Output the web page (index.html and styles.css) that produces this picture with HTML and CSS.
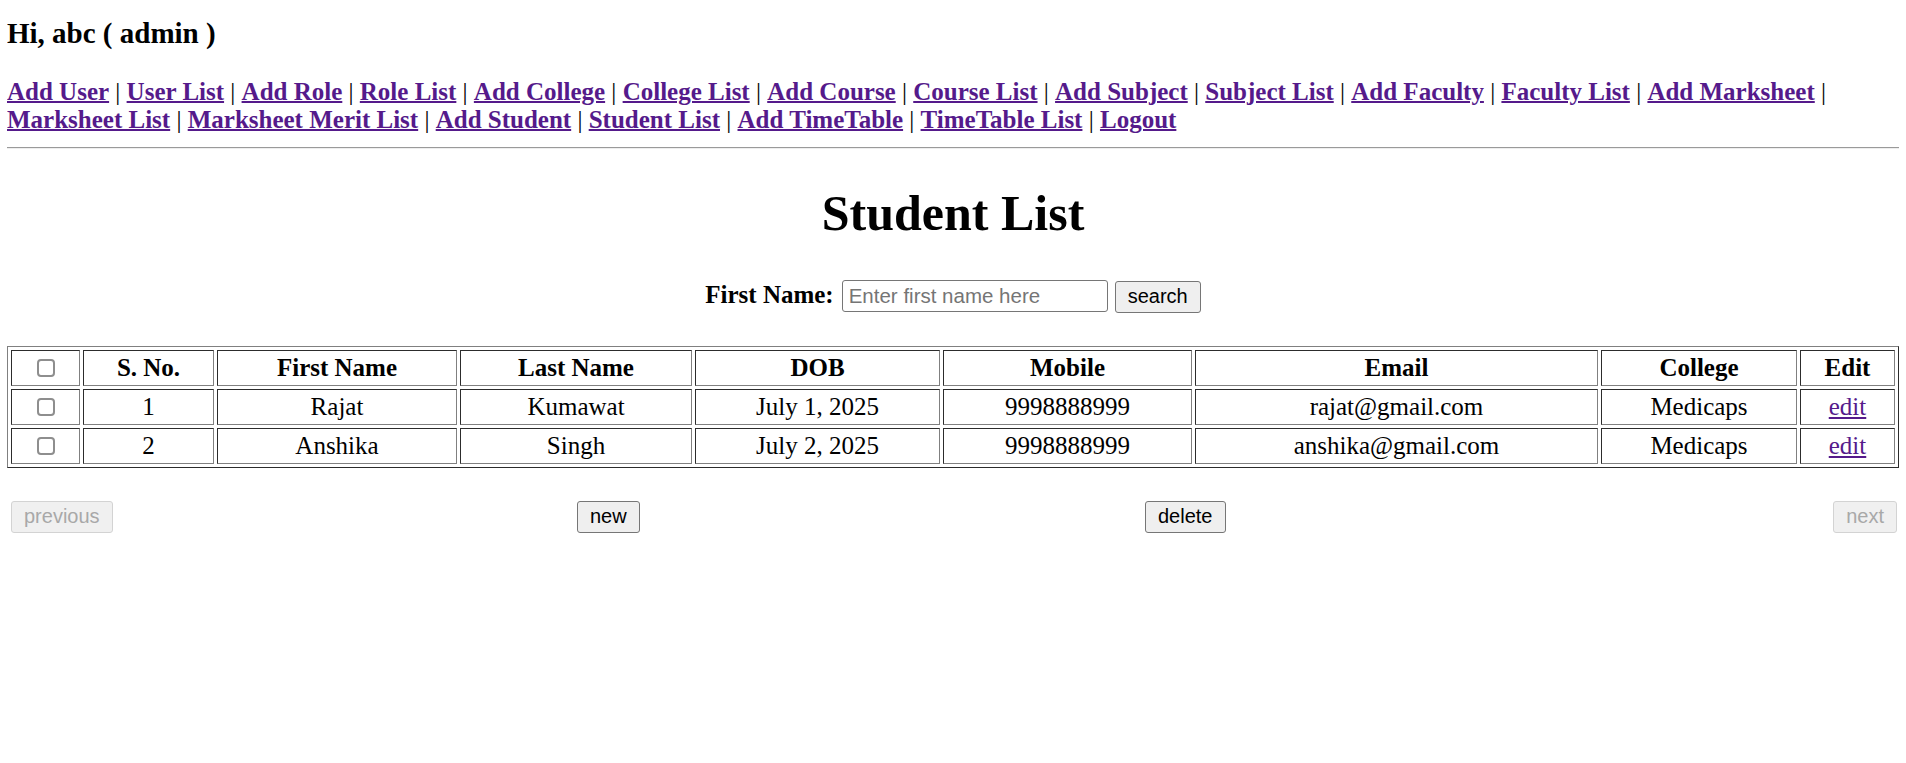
FILE: index.html
```html
<!DOCTYPE html>
<html lang="en">
<head>
<meta charset="utf-8">
<title>Student List</title>
<link rel="stylesheet" href="styles.css">
</head>
<body>
<header class="top">
  <h3 class="greet">Hi, abc ( admin )</h3>
  <nav class="menu">
    <a href="#">Add User</a> | <a href="#">User List</a> | <a href="#">Add Role</a> | <a href="#">Role List</a> | <a href="#">Add College</a> | <a href="#">College List</a> | <a href="#">Add Course</a> | <a href="#">Course List</a> | <a href="#">Add Subject</a> | <a href="#">Subject List</a> | <a href="#">Add Faculty</a> | <a href="#">Faculty List</a> | <a href="#">Add Marksheet</a> | <a href="#">Marksheet List</a> | <a href="#">Marksheet Merit List</a> | <a href="#">Add Student</a> | <a href="#">Student List</a> | <a href="#">Add TimeTable</a> | <a href="#">TimeTable List</a> | <a href="#">Logout</a>
  </nav>
  <hr class="rule">
</header>
<main class="content">
  <h1 class="title">Student List</h1>
  <form class="search">
    <label class="search-label" for="fname">First Name:</label>
    <input class="search-input" id="fname" type="text" placeholder="Enter first name here">
    <button class="btn" type="button">search</button>
  </form>
  <table class="grid">
    <colgroup>
      <col class="c1"><col class="c2"><col class="c3"><col class="c4"><col class="c5"><col class="c6"><col class="c7"><col class="c8"><col class="c9">
    </colgroup>
    <thead>
      <tr>
        <th><input class="chk" type="checkbox"></th>
        <th>S. No.</th>
        <th>First Name</th>
        <th>Last Name</th>
        <th>DOB</th>
        <th>Mobile</th>
        <th>Email</th>
        <th>College</th>
        <th>Edit</th>
      </tr>
    </thead>
    <tbody>
      <tr>
        <td><input class="chk" type="checkbox"></td>
        <td>1</td>
        <td>Rajat</td>
        <td>Kumawat</td>
        <td>July 1, 2025</td>
        <td>9998888999</td>
        <td>rajat@gmail.com</td>
        <td>Medicaps</td>
        <td><a class="edit" href="#">edit</a></td>
      </tr>
      <tr>
        <td><input class="chk" type="checkbox"></td>
        <td>2</td>
        <td>Anshika</td>
        <td>Singh</td>
        <td>July 2, 2025</td>
        <td>9998888999</td>
        <td>anshika@gmail.com</td>
        <td>Medicaps</td>
        <td><a class="edit" href="#">edit</a></td>
      </tr>
    </tbody>
  </table>
  <div class="pager">
    <button class="btn" type="button" disabled>previous</button>
    <button class="btn" type="button">new</button>
    <button class="btn" type="button">delete</button>
    <button class="btn btn-next" type="button" disabled>next</button>
  </div>
</main>
</body>
</html>
```

FILE: styles.css
```css
html, body {
  padding: 0;
  background: #ffffff;
}

body {
  margin: 0 7px;
  font-family: "Liberation Serif", "Times New Roman", serif;
  font-size: 25px;
  color: #000000;
}

.greet {
  margin: 17px 0 0;
  font-size: 29px;
  line-height: 32px;
  font-weight: bold;
}

.menu {
  margin-top: 29px;
  font-size: 25px;
  line-height: 28px;
}

.menu a {
  color: #551a8b;
  font-weight: bold;
  text-decoration: underline;
  text-decoration-thickness: 2px;
}

.rule {
  margin: 13px 0 0;
  height: 0;
  border: 0;
  border-top: 1px solid #9a9a9a;
  border-bottom: 1px solid #eeeeee;
}

.title {
  margin: 36px 0 0;
  font-size: 50px;
  line-height: 56px;
  font-weight: bold;
  text-align: center;
}

.search {
  display: flex;
  justify-content: center;
  align-items: baseline;
  margin: 39px 0 0;
}

.search-label {
  font-weight: bold;
  line-height: 28px;
  margin-right: 8px;
}

.search-input {
  box-sizing: border-box;
  width: 266px;
  height: 32px;
  padding: 0 6px;
  margin: 0 7px 0 0;
  border: 1px solid #767676;
  border-radius: 3px;
  font-family: "Liberation Sans", Arial, sans-serif;
  font-size: 20.5px;
  color: #000000;
  background: #ffffff;
}

.search-input::placeholder {
  color: #757575;
}

.btn {
  box-sizing: border-box;
  height: 32px;
  padding: 0 12px;
  margin: 0;
  border: 1px solid #767676;
  border-radius: 3px;
  background: #efefef;
  color: #000000;
  font-family: "Liberation Sans", Arial, sans-serif;
  font-size: 20px;
}

.btn:disabled {
  color: #a8a8a8;
  border-color: #d3d3d3;
  background: #f0f0f0;
}

.grid {
  margin-top: 33px;
  width: 100%;
  table-layout: fixed;
  border: 1px outset grey;
  border-spacing: 3px;
}

.grid th,
.grid td {
  border: 1px inset grey;
  padding: 3px 1px;
  line-height: 28px;
  text-align: center;
  vertical-align: middle;
  font-size: 25px;
}

.grid th {
  font-weight: bold;
}

.c1 { width: 69px; }
.c2 { width: 131px; }
.c3 { width: 240px; }
.c4 { width: 232px; }
.c5 { width: 245px; }
.c6 { width: 249px; }
.c7 { width: 403px; }
.c8 { width: 196px; }
.c9 { width: 95px; }

.chk {
  appearance: none;
  -webkit-appearance: none;
  display: block;
  box-sizing: border-box;
  width: 18px;
  height: 18px;
  margin: 0 auto;
  border: 2px solid #8e8e8e;
  border-radius: 4px;
  background: #ffffff;
}

.edit {
  color: #551a8b;
  text-decoration: underline;
}

.pager {
  display: grid;
  grid-template-columns: 566px 568px 1fr auto;
  align-items: start;
  margin-top: 33px;
  padding: 0 2px 0 4px;
}

.pager .btn {
  justify-self: start;
}

.pager .btn-next {
  justify-self: end;
}
```
